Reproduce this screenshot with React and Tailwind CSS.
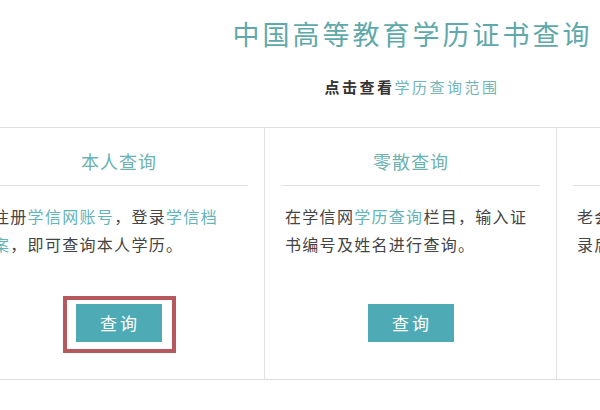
const font = { fontFamily: '"Noto Sans CJK SC", "Noto Sans", sans-serif' }

function Card({ title, lines, last, marked }) {
  return (
    <div className={`flex flex-col px-4 pt-[21px] pb-[37px] ${last ? '' : 'border-r border-[#e2e2e2]'}`}>
      <h3 className="text-center text-[18px] leading-[24px] tracking-[1px] pl-[1px] text-[#6db1b1] h-[24px]">{title}</h3>
      <div className="mt-[12px] h-px bg-[#e0e0e0]" />
      <div className="mt-[16px] pl-1 text-[16px] leading-[28px] tracking-[1.3px] text-[#444] whitespace-nowrap h-[56px]">
        {lines.map((parts, i) => (
          <div key={i}>
            {parts.map((p, j) => (
              <span key={j} className={p.link ? 'text-[#62b3b8]' : ''}>{p.t}</span>
            ))}
          </div>
        ))}
      </div>
      <div className="mt-[46px] flex justify-center">
        <div className="relative">
          <button className="w-[86px] h-[38px] bg-[#4eabb6] text-white text-[17px] tracking-[3px] pl-[3px]">查询</button>
          {marked && (
            <div className="absolute -left-[13px] -right-[14px] -top-[8px] -bottom-[11px] border-4 border-[#b6585d]" />
          )}
        </div>
      </div>
    </div>
  )
}

export default function App() {
  const cards = [
    {
      title: '本人查询',
      marked: true,
      lines: [
        [{ t: '注册' }, { t: '学信网账号', link: true }, { t: '，登录' }, { t: '学信档', link: true }],
        [{ t: '案', link: true }, { t: '，即可查询本人学历。' }],
      ],
    },
    {
      title: '零散查询',
      lines: [
        [{ t: '在学信网' }, { t: '学历查询', link: true }, { t: '栏目，输入证' }],
        [{ t: '书编号及姓名进行查询。' }],
      ],
    },
    {
      title: '老证书查询',
      last: true,
      lines: [
        [{ t: '老会员请使用原有账号登' }],
        [{ t: '录后查询' }],
      ],
    },
  ]

  return (
    <div className="w-[600px] h-[410px] overflow-hidden bg-white" style={font}>
      <div className="-ml-[27px] w-[876px]">
        <h1 className="pt-[19px] text-center text-[27px] leading-[30px] tracking-[3px] pl-[3px] text-[#5fa9aa]">
          中国高等教育学历证书查询
        </h1>
        <p className="mt-[28px] text-center text-[15px] leading-[20px] tracking-[2.5px] pl-[2px]">
          <span className="font-bold text-[#333]">点击查看</span>
          <span className="text-[#72b5b9]">学历查询范围</span>
        </p>
        <div className="mt-[30px] grid grid-cols-3 border-t border-b border-[#dedede]">
          {cards.map((c) => (
            <Card key={c.title} {...c} />
          ))}
        </div>
      </div>
    </div>
  )
}
